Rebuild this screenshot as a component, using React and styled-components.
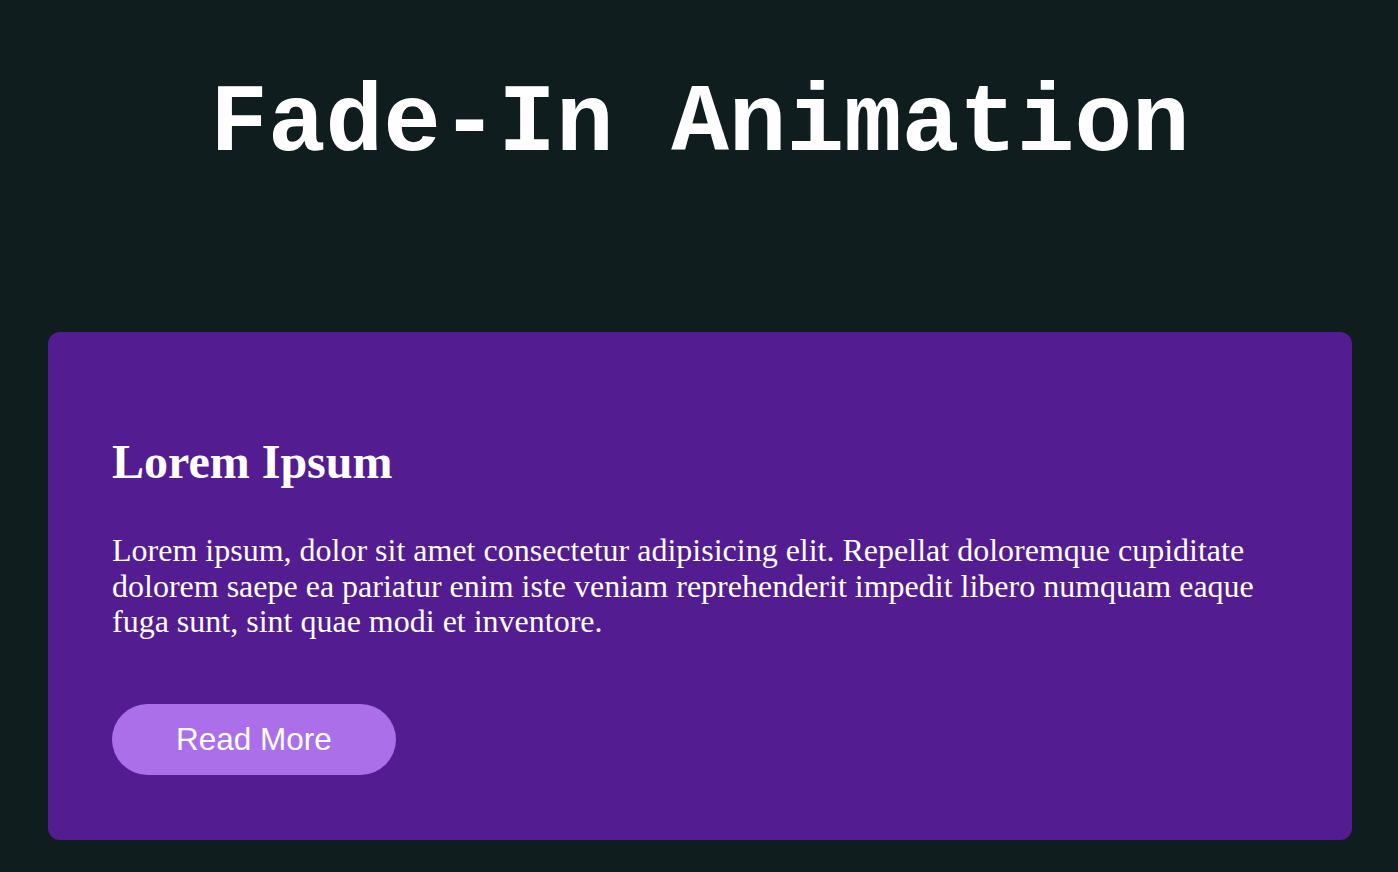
import React from "react";
import styled, { createGlobalStyle } from "styled-components";

const GlobalStyle = createGlobalStyle`
  * {
    box-sizing: border-box;
  }
  body {
    margin: 0;
    background-color: #0f1d1e;
    color: #fff;
    font-family: "Liberation Serif", "Times New Roman", serif;
  }
`;

const Page = styled.main`
  min-height: 872px;
  padding: 0 46px 32px 48px;
  display: flex;
  flex-direction: column;
`;

const Title = styled.h1`
  margin: 0;
  height: 332px;
  padding-top: 70px;
  text-align: center;
  font-family: "Liberation Mono", "Courier New", monospace;
  font-size: 96px;
  font-weight: 700;
  line-height: 1.15;
  color: #fff;
`;

const Card = styled.section`
  background-color: #531c91;
  border-radius: 12px;
  padding: 102px 64px 65px;
  display: flex;
  flex-direction: column;
  align-items: flex-start;
`;

const Heading = styled.h2`
  margin: 0 0 44px;
  font-size: 48px;
  font-weight: 700;
  line-height: 1.15;
`;

const Text = styled.p`
  margin: 0 0 64px;
  font-size: 32px;
  line-height: 1.11;
`;

const Button = styled.button`
  border: none;
  cursor: pointer;
  height: 71px;
  padding: 0 64px;
  border-radius: 36px;
  background-color: #aa6fe9;
  color: #fff;
  font-family: "Liberation Sans", Arial, sans-serif;
  font-size: 31.5px;
`;

export default function App() {
  return (
    <>
      <GlobalStyle />
      <Page>
        <Title>Fade-In Animation</Title>
        <Card>
          <Heading>Lorem Ipsum</Heading>
          <Text>
            Lorem ipsum, dolor sit amet consectetur adipisicing elit. Repellat
            doloremque cupiditate dolorem saepe ea pariatur enim iste veniam
            reprehenderit impedit libero numquam eaque fuga sunt, sint quae modi
            et inventore.
          </Text>
          <Button>Read More</Button>
        </Card>
      </Page>
    </>
  );
}
